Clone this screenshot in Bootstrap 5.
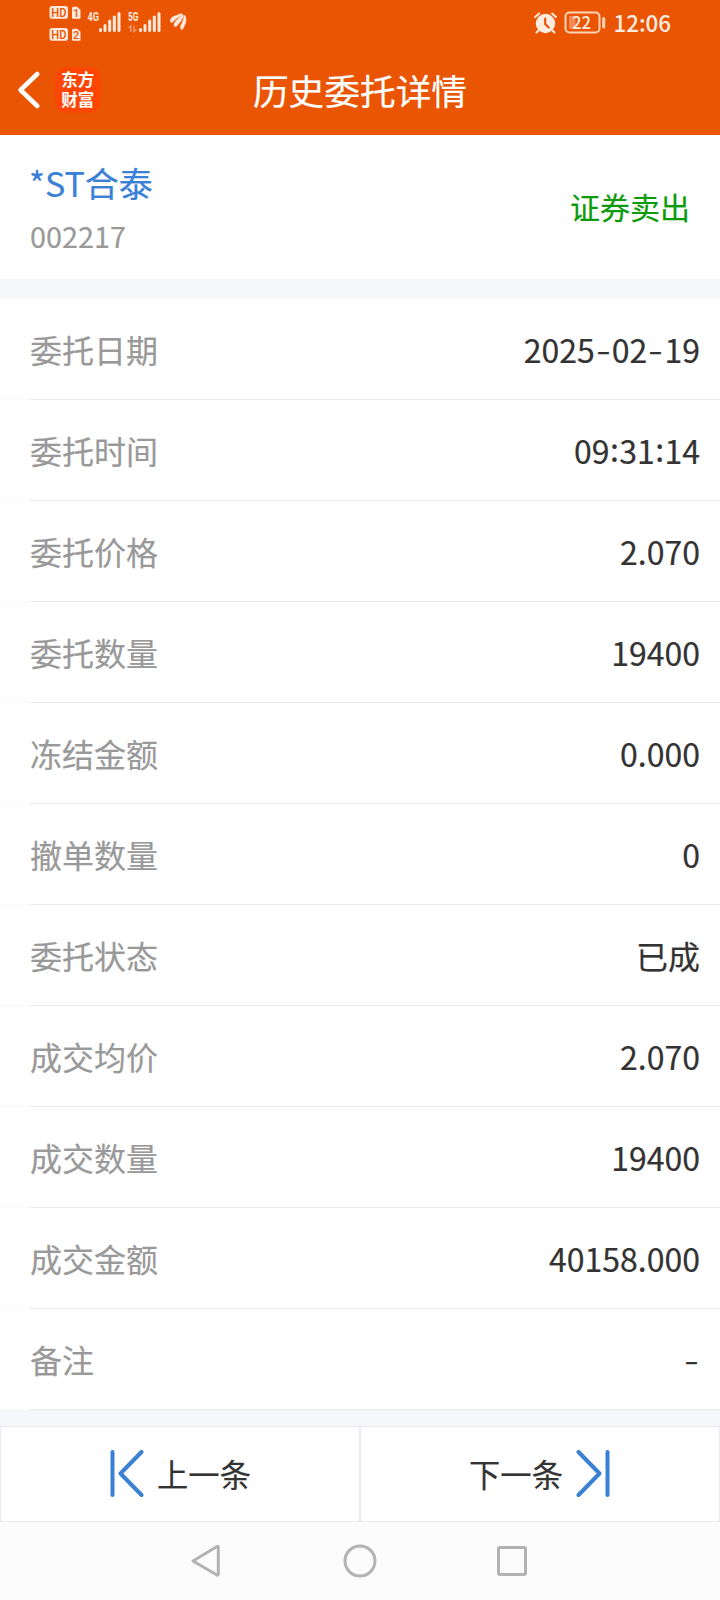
<!DOCTYPE html>
<html lang="zh-CN">
<head>
<meta charset="utf-8">
<meta name="viewport" content="width=device-width, initial-scale=1">
<title>历史委托详情</title>
<link href="https://cdn.jsdelivr.net/npm/bootstrap@5.3.0/dist/css/bootstrap.min.css" rel="stylesheet">
<style>
  body { font-family: "Noto Sans CJK SC", sans-serif; background: #f6f7fa; color: #333; line-height: 1; -webkit-text-stroke: .2px currentColor; }
  svg { display: block; flex: none; -webkit-text-stroke: 0; }
  .app-head { background: #ea5504; height: 135px; color: #fff; }
  .status-bar { height: 45px; }
  .title-bar { height: 90px; display: grid; grid-template-columns: 1fr auto 1fr; }
  .title-text { font-size: 35.7px; font-weight: 400; line-height: 90px; }
  .stock { height: 144px; padding: 27px 30px 0; margin-bottom: 20px; }
  .stock-name { font-size: 34px; line-height: 42px; color: #3a80d4; margin-left: -1px; }
  .stock-code { font-size: 28.8px; line-height: 40px; margin-top: 12px; color: #999; }
  .side-tag { font-size: 30px; line-height: 40px; color: #0b9b0b; padding-top: 24px; }
  .field { height: 101px; padding: 0 20px 2px 30px; font-size: 32px; background: linear-gradient(90deg, #fafafa 30px, #ebebeb 30px) bottom / 100% 1px no-repeat #fff; }
  .field dt { font-weight: 400; color: #999; }
  .hy { display: inline-block; margin: 0 3px; transform: translateY(-1px) scaleX(1.3); }
  .co { display: inline-block; margin: 0 .4px; transform: translateY(-2px); }
  .pager { height: 96px; margin-top: 16px; }
  .pager-btn { border: 1px solid #ebebeb; border-radius: 0; background: #fff; font-size: 31.3px; color: #333; padding: 0; line-height: 1; gap: 8px; }
  .sys-nav { height: 78px; background: #fcfcfc; }
</style>
</head>
<body>
<header class="app-head">
  <div class="status-bar d-flex justify-content-between">
    <svg width="240" height="45" viewBox="0 0 240 45" fill="#ffe9dc" font-family="Roboto, sans-serif" font-weight="700">
      <rect x="49.5" y="6" width="18.5" height="12.7" rx="2.8"/>
      <rect x="49.5" y="28" width="18.5" height="12.7" rx="2.8"/>
      <path d="M72 8.300q0-1.500 1.500-1.500h3.500l3.500 3v8q0 1-1 1h-6.500q-1 0-1-1zM72 30.300q0-1.500 1.500-1.500h3.500l3.500 3v8q0 1-1 1h-6.500q-1 0-1-1z"/>
      <g fill="#ea5504" font-size="12.500" font-weight="500">
        <text x="51.300" y="16.800" textLength="15.200" lengthAdjust="spacingAndGlyphs">HD</text>
        <text x="51.300" y="38.800" textLength="15.200" lengthAdjust="spacingAndGlyphs">HD</text>
        <text x="73" y="17" font-size="11">1</text><text x="73" y="39" font-size="11">2</text>
      </g>
      <g font-size="13">
        <text x="87.500" y="21" textLength="11.500" lengthAdjust="spacingAndGlyphs">4G</text>
        <text x="128" y="21" textLength="10.500" lengthAdjust="spacingAndGlyphs">5G</text>
      </g>
      <g stroke="#ffe9dc" stroke-width="3" stroke-linecap="round">
        <path d="M100.500 29.500v1M105 25.500v5M109.700 21v9.500M114.300 17v13.500M119 13.500v17"/>
        <path d="M140.500 29.500v1M145 25.500v5M149.700 21v9.500M154.300 17v13.500M159 13.500v17"/>
      </g>
      <path d="M128.500 28l2.300-2v6M134 25.500v6l2.500-2" fill="none" stroke="#f49a70" stroke-width="1.500"/>
      <g stroke="#ffe9dc" stroke-width=".5">
        <path d="M170.300 21Q170.500 17 175 16Q178.500 15 181 13.300Q182.300 14.300 180 16.200Q176 18.500 172 22.500Q170.500 22.700 170.300 21z"/>
        <path d="M174 24.500Q174.500 21.500 178 19Q181 16.500 182.300 14Q183.700 14.500 183 16.800Q181.800 20.500 178.500 24Q176 27.300 174.500 26.300Q173.800 25.700 174 24.500z"/>
        <path d="M180.800 28.500Q179.700 26.700 181.700 23.500Q183.800 20 184 15.300Q185.300 15.300 186 18.500Q186.500 22.500 184 26.500Q182 31.500 180.800 28.500z"/>
      </g>
    </svg>
    <svg width="220" height="45" viewBox="0 0 220 45" fill="#ffece1" font-family="Noto Sans CJK SC, sans-serif">
      <circle cx="45.500" cy="23.500" r="9.700"/>
      <path d="M35.200 17l4-3.500M56 17l-4-3.500M38.500 30.500l-2 2M52.500 30.500l2 2" stroke="#ffece1" stroke-width="2" stroke-linecap="round"/>
      <path d="M45.200 18.500v5.500l3.500 3.500" stroke="#ea5504" stroke-width="2.200" fill="none" stroke-linecap="round"/>
      <rect x="65.500" y="12.500" width="34" height="20" rx="4" fill="none" stroke="#ffd3b8" stroke-width="2"/>
      <path d="M69 16h6.500v13h-5q-1.500 0-1.500-1.500z" fill="#f38a52"/>
      <rect x="102.200" y="17" width="3" height="11.500" rx="1.500" fill="#ffd3b8"/>
      <text x="72" y="29" font-size="17.500" font-weight="500" textLength="19" lengthAdjust="spacingAndGlyphs">22</text>
      <text x="113.500" y="31.700" font-size="23.200" font-weight="500" textLength="57.500" lengthAdjust="spacingAndGlyphs">12:06</text>
    </svg>
  </div>
  <div class="title-bar">
    <svg width="110" height="90" viewBox="0 0 110 90" aria-label="返回">
      <path d="M37.300 29L20.500 45L37.300 61" fill="none" stroke="#fff" stroke-width="4.500" stroke-linecap="round" stroke-linejoin="round"/>
      <rect x="55.500" y="22.500" width="45" height="45" rx="10" fill="#ff4503"/>
      <g fill="#fff" font-family="Liberation Sans, Noto Sans CJK SC, sans-serif" font-weight="700" font-size="16.500">
        <text x="61.200" y="41.200">东方</text><text x="61.200" y="60.700">财富</text>
      </g>
    </svg>
    <h1 class="title-text m-0">历史委托详情</h1>
  </div>
</header>
<main>
  <section class="stock bg-white d-flex justify-content-between">
    <div>
      <div class="stock-name">*ST合泰</div>
      <div class="stock-code">002217</div>
    </div>
    <div class="side-tag">证券卖出</div>
  </section>
  <dl class="m-0">
    <div class="field d-flex align-items-center justify-content-between"><dt>委托日期</dt><dd class="m-0">2025<span class="hy">-</span>02<span class="hy">-</span>19</dd></div>
    <div class="field d-flex align-items-center justify-content-between"><dt>委托时间</dt><dd class="m-0">09<span class="co">:</span>31<span class="co">:</span>14</dd></div>
    <div class="field d-flex align-items-center justify-content-between"><dt>委托价格</dt><dd class="m-0">2.070</dd></div>
    <div class="field d-flex align-items-center justify-content-between"><dt>委托数量</dt><dd class="m-0">19400</dd></div>
    <div class="field d-flex align-items-center justify-content-between"><dt>冻结金额</dt><dd class="m-0">0.000</dd></div>
    <div class="field d-flex align-items-center justify-content-between"><dt>撤单数量</dt><dd class="m-0">0</dd></div>
    <div class="field d-flex align-items-center justify-content-between"><dt>委托状态</dt><dd class="m-0">已成</dd></div>
    <div class="field d-flex align-items-center justify-content-between"><dt>成交均价</dt><dd class="m-0">2.070</dd></div>
    <div class="field d-flex align-items-center justify-content-between"><dt>成交数量</dt><dd class="m-0">19400</dd></div>
    <div class="field d-flex align-items-center justify-content-between"><dt>成交金额</dt><dd class="m-0">40158.000</dd></div>
    <div class="field d-flex align-items-center justify-content-between"><dt>备注</dt><dd class="m-0"><span class="hy">-</span></dd></div>
  </dl>
</main>
<div class="pager d-flex">
  <button class="pager-btn w-50 d-flex align-items-center justify-content-center" type="button">
    <svg width="40" height="48" viewBox="0 0 40 48" fill="none" stroke="#3a80d4" stroke-width="4" stroke-linecap="round" stroke-linejoin="round"><path d="M3.500 2v43M32.500 2L11.500 23.500L32.500 45"/></svg>
    <span>上一条</span>
  </button>
  <button class="pager-btn w-50 d-flex align-items-center justify-content-center" type="button">
    <span>下一条</span>
    <svg width="40" height="48" viewBox="0 0 40 48" fill="none" stroke="#3a80d4" stroke-width="4" stroke-linecap="round" stroke-linejoin="round"><path d="M36.500 2v43M7.500 2L28.500 23.500L7.500 45"/></svg>
  </button>
</div>
<nav class="sys-nav d-flex justify-content-center">
  <svg width="360" height="78" viewBox="0 0 360 78" fill="none" stroke="#b2b2b2" stroke-width="3" stroke-linejoin="round">
    <path d="M13 39L37 24.500q1.300-.5 1.300 1V52q0 1.500-1.300 1z"/>
    <circle cx="180" cy="39" r="15"/>
    <rect x="318.500" y="25.500" width="27" height="27" rx="1.500"/>
  </svg>
</nav>
<script src="https://cdn.jsdelivr.net/npm/bootstrap@5.3.0/dist/js/bootstrap.bundle.min.js"></script>
</body>
</html>
